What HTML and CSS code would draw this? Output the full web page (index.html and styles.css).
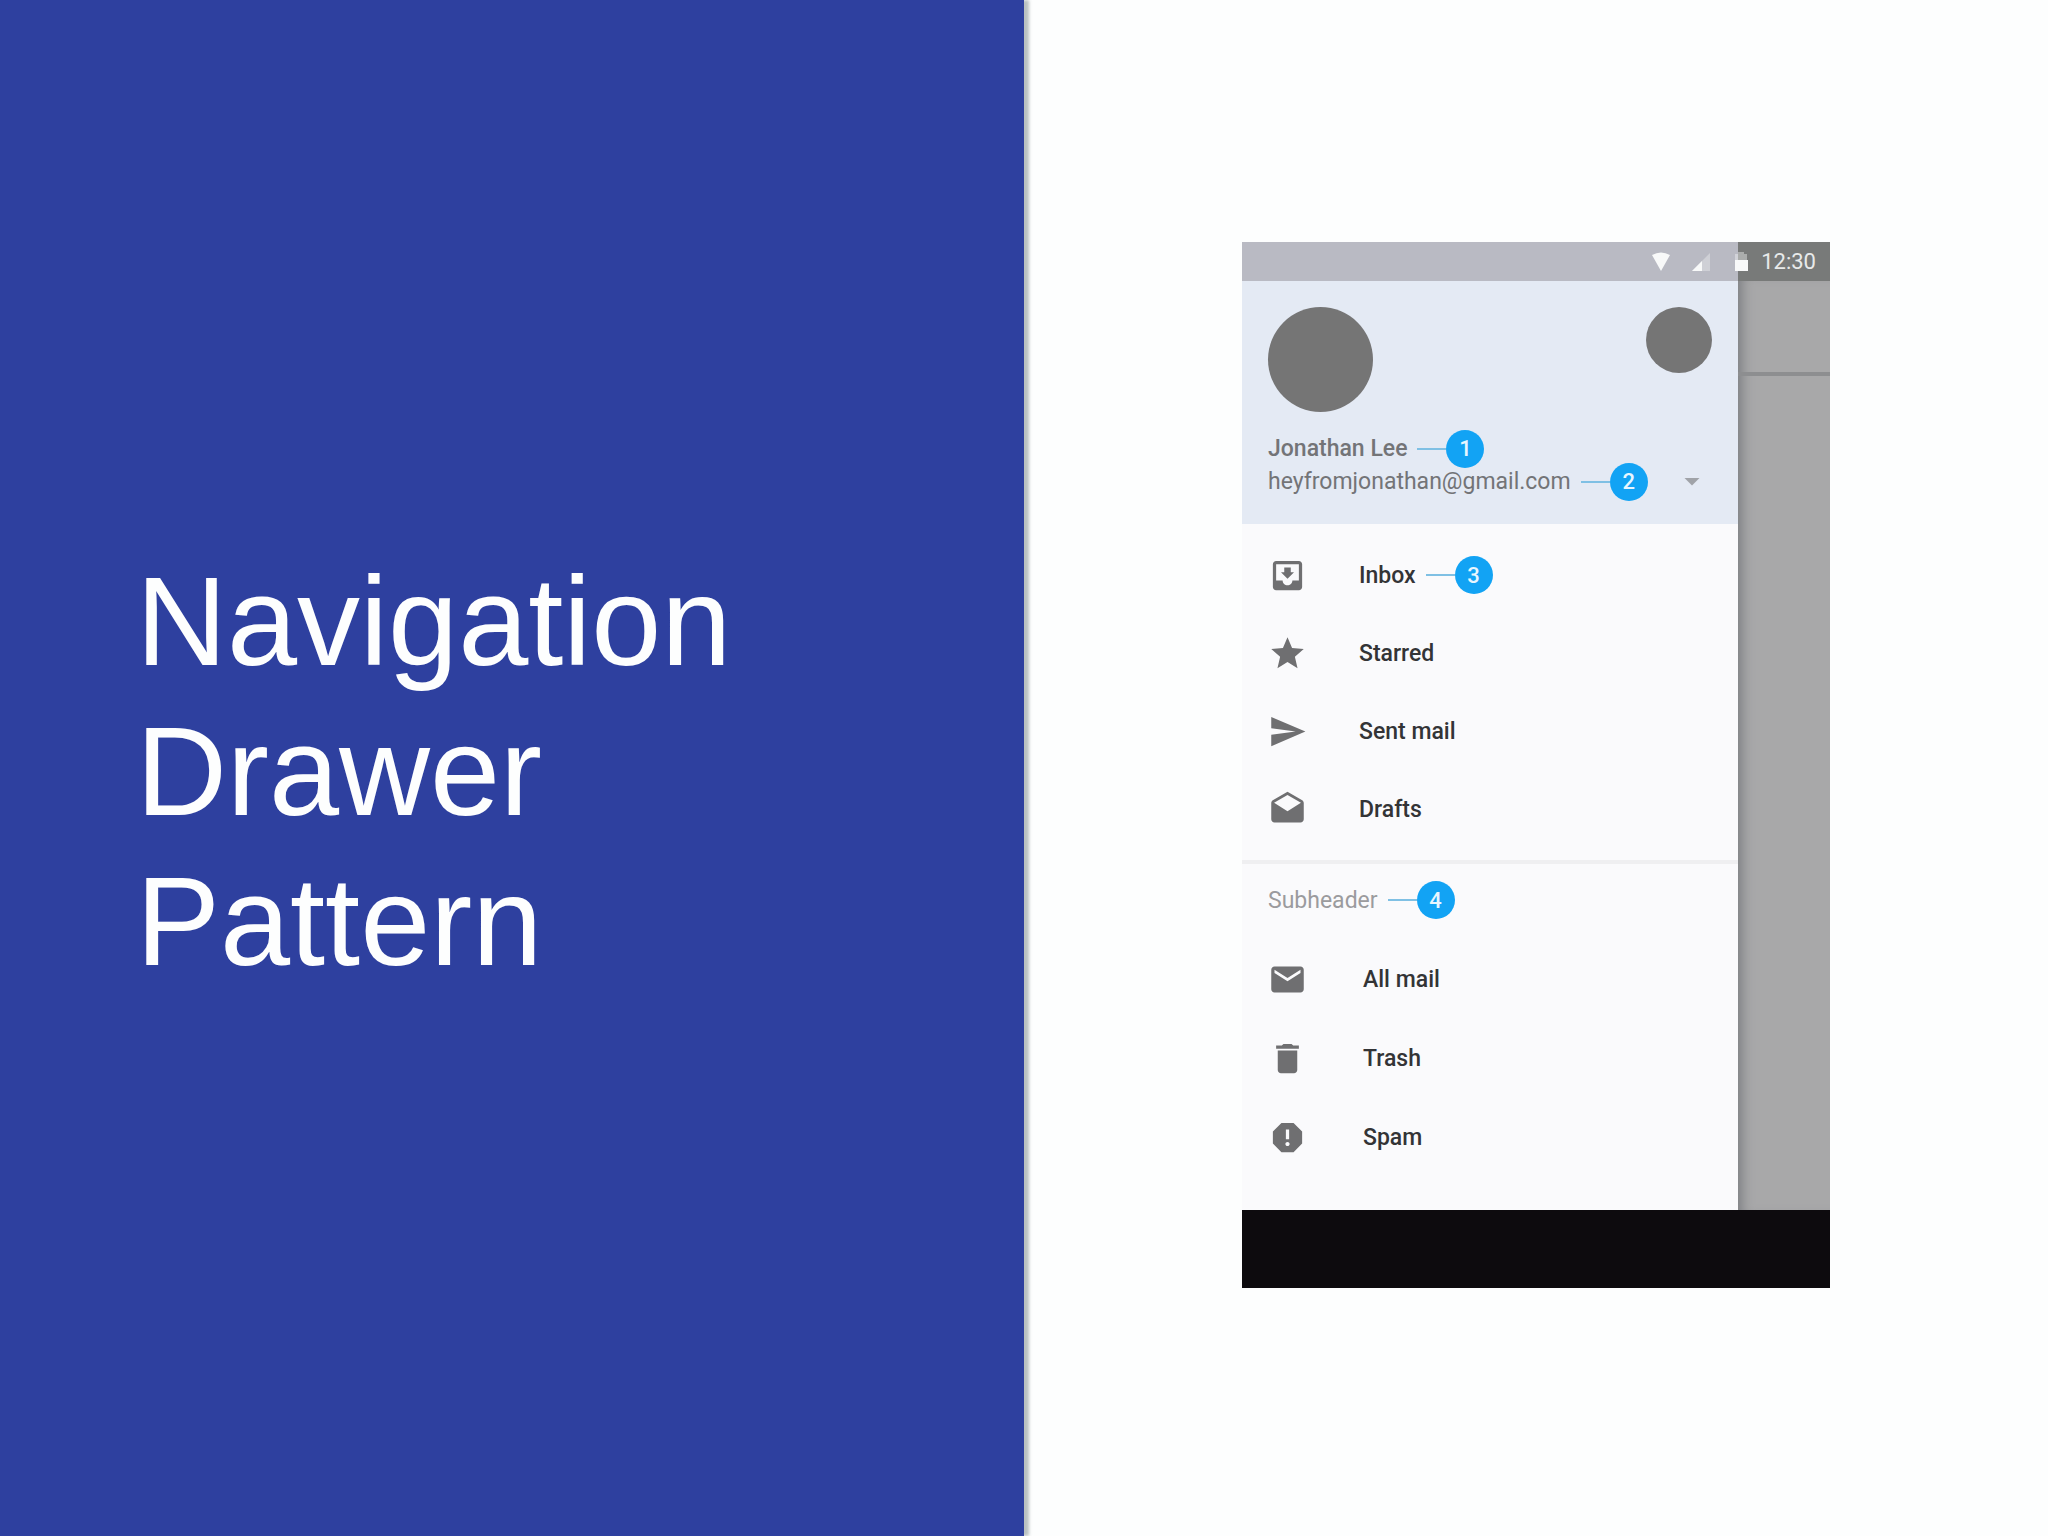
FILE: index.html
```html
<!DOCTYPE html>
<html lang="en">
<head>
  <meta charset="UTF-8" />
  <meta name="viewport" content="width=device-width, initial-scale=1.0" />
  <title>Navigation Drawer Pattern</title>
  <link rel="stylesheet" href="styles.css">
</head>
<body>
  <main class="slide">
    <section class="title-pane">
      <h1>Navigation<br>Drawer<br>Pattern</h1>
    </section>

    <section class="demo-pane">
      <div class="phone">
        <!-- Status bar -->
        <div class="status-bar">
          <div class="status-icons">
            <svg class="status-icon" viewBox="0 0 20 20" aria-hidden="true"><path d="M1 3Q10 -2 19 3L10 19Z"/></svg>
            <svg class="status-icon" viewBox="0 0 20 20" aria-hidden="true"><path opacity=".35" d="M19 1V19H1Z"/><path d="M11 9V19H1Z"/></svg>
            <svg class="status-icon" viewBox="0 0 20 20" aria-hidden="true"><path opacity=".4" d="M4 2h3V0h6v2h3v6H4Z"/><path d="M4 8h13v11H4Z"/></svg>
          </div>
          <span class="time">12:30</span>
        </div>

        <div class="screen">
          <nav class="drawer">
            <header class="account">
              <div class="avatars">
                <span class="avatar"></span>
                <span class="avatar small"></span>
              </div>
              <div class="account-row name">Jonathan Lee <span class="marker">1</span></div>
              <div class="account-row">heyfromjonathan@gmail.com <span class="marker">2</span>
                <button class="switch" aria-label="Switch account"></button>
              </div>
            </header>

            <ul class="menu">
              <li><a href="#">
                <svg class="icon" viewBox="0 0 24 24" aria-hidden="true"><path d="M19 3H5c-1.100 0-2 .9-2 2v14c0 1.100.9 2 2 2h14c1.100 0 2-.9 2-2V5c0-1.100-.9-2-2-2zm0 12h-4c0 1.660-1.350 3-3 3s-3-1.340-3-3H5V5h14v10zm-3-5h-2V7h-4v3H8l4 4 4-4z"/></svg>
                Inbox <span class="marker">3</span></a></li>
              <li><a href="#">
                <svg class="icon" viewBox="0 0 24 24" aria-hidden="true"><path d="M12 17.270L18.180 21l-1.640-7.030L22 9.240l-7.190-.61L12 2 9.190 8.630 2 9.240l5.460 4.730L5.820 21z"/></svg>
                Starred</a></li>
              <li><a href="#">
                <svg class="icon" viewBox="0 0 24 24" aria-hidden="true"><path d="M2 21l21-9L2 3v7l15 2-15 2z"/></svg>
                Sent mail</a></li>
              <li><a href="#">
                <svg class="icon" viewBox="0 0 24 24" aria-hidden="true"><path d="M22 8c0-.72-.37-1.350-.94-1.700L12 1 2.950 6.300C2.380 6.650 2 7.280 2 8v10c0 1.100.9 2 2 2h16c1.100 0 2-.9 2-2V8zm-10 5L3.740 7.840 12 3l8.260 4.840L12 13z"/></svg>
                Drafts</a></li>
            </ul>

            <h2 class="subheader">Subheader <span class="marker">4</span></h2>

            <ul class="menu secondary">
              <li><a href="#">
                <svg class="icon" viewBox="0 0 24 24" aria-hidden="true"><path d="M20 4H4c-1.100 0-1.990.9-1.990 2L2 18c0 1.100.9 2 2 2h16c1.100 0 2-.9 2-2V6c0-1.100-.9-2-2-2zm0 4l-8 5-8-5V6l8 5 8-5v2z"/></svg>
                All mail</a></li>
              <li><a href="#">
                <svg class="icon" viewBox="0 0 24 24" aria-hidden="true"><path d="M6 19c0 1.100.9 2 2 2h8c1.100 0 2-.9 2-2V7H6v12zM19 4h-3.500l-1-1h-5l-1 1H5v2h14V4z"/></svg>
                Trash</a></li>
              <li><a href="#">
                <svg class="icon" viewBox="0 0 24 24" aria-hidden="true"><path d="M15.730 3H8.270L3 8.270v7.460L8.270 21h7.460L21 15.730V8.270L15.730 3zM12 17.300c-.72 0-1.300-.58-1.300-1.300s.58-1.300 1.300-1.300 1.300.58 1.300 1.300-.58 1.300-1.300 1.300zm1-4.300h-2V7h2v6z"/></svg>
                Spam</a></li>
            </ul>
          </nav>

          <!-- Dimmed app behind the drawer -->
          <div class="scrim">
            <div class="app-bar"></div>
          </div>
        </div>

        <div class="system-bar"></div>
      </div>
    </section>
  </main>
</body>
</html>
```

FILE: styles.css
```css
* {
  box-sizing: border-box;
}

body {
  margin: 0;
  font-family: Roboto, sans-serif;
  background-color: #fdfefe;
}

.slide {
  display: grid;
  grid-template-columns: 1fr 1fr;
  min-height: 100vh;
}

.title-pane {
  display: flex;
  align-items: center;
  padding: 8px 136px 0;
  background-color: #2e409f;
  box-shadow: 5px 0 3px rgba(60, 80, 80, 0.35);
}

h1 {
  margin: 0;
  font-family: "Liberation Sans", Arial, sans-serif;
  font-size: 126px;
  font-weight: normal;
  line-height: 150px;
  color: #fdfefe;
}

.demo-pane {
  display: flex;
  justify-content: center;
  align-items: center;
  padding: 0 24px 6px;
}

.phone {
  --drawer-width: 496px;
  width: 100%;
  max-width: 588px;
}

.status-bar {
  display: flex;
  align-items: center;
  justify-content: flex-end;
  gap: 10px;
  height: 39px;
  padding-right: 14px;
  background: linear-gradient(to right, #b9bac3 var(--drawer-width), #787a79 var(--drawer-width));
  color: #e8eaea;
}

.status-icons {
  display: flex;
  gap: 20px;
}

.status-icon {
  width: 20px;
  height: 20px;
  fill: #f8f9f9;
}

.time {
  font-size: 22px;
}

.screen {
  display: flex;
}

.drawer {
  width: var(--drawer-width);
  padding-bottom: 33px;
  background-color: #fafafc;
}

.account {
  height: 243px;
  padding: 26px;
  background-color: #e4eaf4;
  color: #737477;
}

.avatars {
  display: flex;
  justify-content: space-between;
  margin-bottom: 20px;
}

.avatar {
  width: 105px;
  height: 105px;
  border-radius: 50%;
  background-color: #757575;
}

.avatar.small {
  width: 66px;
  height: 66px;
}

.account-row {
  display: flex;
  align-items: center;
  height: 33px;
  font-size: 23px;
}

.account-row.name {
  font-weight: 500;
}

/* Numbered callout with its leader line */
.marker {
  display: flex;
  align-items: center;
  justify-content: center;
  position: relative;
  width: 38px;
  height: 38px;
  margin-left: 39px;
  border-radius: 50%;
  background-color: #12a3f4;
  color: #e8f6ff;
  font-size: 22px;
  font-weight: 500;
}

.marker::before {
  content: "";
  position: absolute;
  right: 100%;
  width: 29px;
  height: 2px;
  background-color: #7fc0e4;
}

.switch {
  width: 40px;
  height: 32px;
  margin-left: auto;
  padding: 0;
  border: none;
  background: none;
  cursor: pointer;
}

.switch::before {
  content: "";
  display: block;
  margin: 0 auto;
  width: 16px;
  height: 8px;
  background-color: #a0a3a8;
  clip-path: polygon(0 0, 100% 0, 50% 100%);
}

.menu {
  margin: 0;
  padding: 12px 0;
  list-style: none;
}

.menu a {
  display: flex;
  align-items: center;
  height: 78px;
  padding: 0 26px;
  color: #333436;
  font-size: 23px;
  font-weight: 500;
  text-decoration: none;
}

.menu.secondary {
  padding: 0;
}

.menu.secondary a {
  height: 79px;
}

.icon {
  width: 39px;
  height: 39px;
  margin-right: 52px;
  fill: #6f6f71;
}

.menu.secondary .icon {
  margin-right: 56px;
}

.subheader {
  display: flex;
  align-items: center;
  height: 80px;
  margin: 0;
  padding: 0 26px 4px;
  border-top: 4px solid #efeff1;
  color: #9b9b9e;
  font-size: 23px;
  font-weight: normal;
}

.scrim {
  flex: 1;
  background-color: #a8a8a9;
  box-shadow: inset 12px 0 12px -8px #7c7e82;
}

.app-bar {
  height: 95px;
  border-bottom: 4px solid #8d8e90;
}

.system-bar {
  height: 78px;
  background-color: #0d0b0e;
}
```
